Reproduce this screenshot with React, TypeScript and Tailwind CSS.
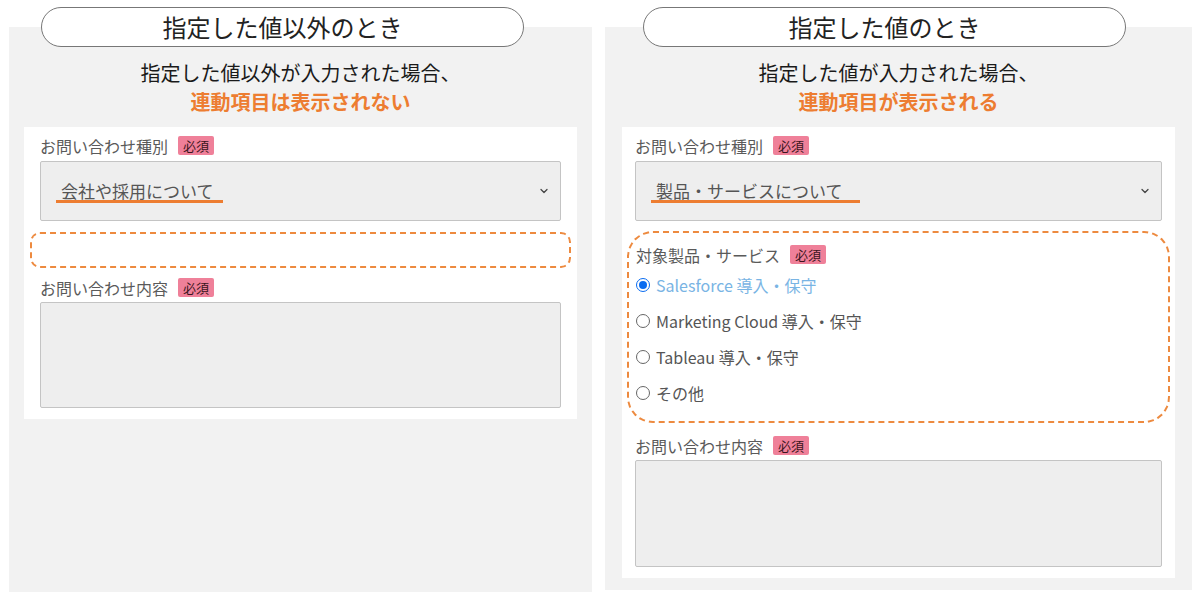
import { ChevronDown } from 'lucide-react'

const FONT = { fontFamily: '"Noto Sans CJK JP", "Noto Sans", sans-serif' }

const Badge = () => (
  <span className="ml-[10px] inline-flex h-[19px] items-center rounded-[2px] bg-[#ef8099] px-[5px] text-[13px] leading-none text-[#3b1520]">
    必須
  </span>
)

const Label = ({ text }: { text: string }) => (
  <div className="flex items-center text-[16px] leading-none text-[#5a5a5a]">
    <span>{text}</span>
    <Badge />
  </div>
)

const SelectBox = ({ value, underline }: { value: string; underline: string }) => (
  <div className="relative mt-[6px] flex h-[60px] items-center rounded-[2px] border border-[#c4c4c4] bg-[#eeeeee] pl-[20px] pr-[10px]">
    <div className="relative flex-1">
      <span className="text-[17px] leading-none text-[#555]">{value}</span>
      <div className={`absolute left-[-5px] top-[21px] h-[3px] bg-[#ed7d31] ${underline}`} />
    </div>
    <ChevronDown size={12} strokeWidth={2.5} className="text-[#444]" />
  </div>
)

const TextArea = ({ h }: { h: string }) => (
  <div className={`mt-[5px] rounded-[2px] border border-[#c4c4c4] bg-[#eeeeee] ${h}`} />
)

const Radio = ({ label, checked }: { label: string; checked?: boolean }) => (
  <div className="flex h-[36px] items-center">
    {checked ? (
      <span className="flex h-[14px] w-[14px] items-center justify-center rounded-full border border-[#0a6cf0] bg-white">
        <span className="h-[8px] w-[8px] rounded-full bg-[#0a6cf0]" />
      </span>
    ) : (
      <span className="h-[14px] w-[14px] rounded-full border border-[#666] bg-white" />
    )}
    <span className={`ml-[6px] text-[16px] leading-none ${checked ? 'text-[#79b4e4]' : 'text-[#555]'}`}>{label}</span>
  </div>
)

const Header = ({ title, line1, line2, pill }: { title: string; line1: string; line2: string; pill: string }) => (
  <>
    <div
      className={`-mt-[20px] flex h-[40px] w-[483px] items-center justify-center rounded-full border border-[#777] bg-white text-[24px] leading-none text-[#222] ${pill}`}
    >
      {title}
    </div>
    <div className="mt-[11px] text-center text-[20px] leading-[29px] text-[#1a1a1a]">{line1}</div>
    <div className="text-center text-[20px] font-bold leading-[29px] text-[#ed7d31]">{line2}</div>
  </>
)

export default function App() {
  return (
    <div className="flex h-[598px] w-[1200px] gap-[13px] bg-white pl-[9px] pt-[27px]" style={FONT}>
      <div className="flex h-[565px] w-[583px] flex-col bg-[#f2f2f2]">
        <Header
          title="指定した値以外のとき"
          line1="指定した値以外が入力された場合、"
          line2="連動項目は表示されない"
          pill="ml-[32px]"
        />
        <div className="mx-[15px] mt-[11px] bg-white px-[16px] pb-[11px] pt-[9px]">
          <Label text="お問い合わせ種別" />
          <SelectBox value="会社や採用について" underline="w-[167px]" />
          <div className="-mx-[10px] mt-[11px] h-[36px] rounded-[10px] border-2 border-dashed border-[#ed8a3f]" />
          <div className="mt-[10px]">
            <Label text="お問い合わせ内容" />
          </div>
          <TextArea h="h-[106px]" />
        </div>
      </div>

      <div className="flex h-[563px] w-[587px] flex-col bg-[#f2f2f2]">
        <Header
          title="指定した値のとき"
          line1="指定した値が入力された場合、"
          line2="連動項目が表示される"
          pill="ml-[38px]"
        />
        <div className="mx-[17px] mt-[11px] bg-white px-[13px] pb-[11px] pt-[9px]">
          <Label text="お問い合わせ種別" />
          <SelectBox value="製品・サービスについて" underline="w-[209px]" />
          <div className="-mx-[8px] mt-[10px] rounded-[26px] border-2 border-dashed border-[#ed8a3f] px-[7px] pb-[10px] pt-[12px]">
            <Label text="対象製品・サービス" />
            <div className="mt-[3px]">
              <Radio label="Salesforce 導入・保守" checked />
              <Radio label="Marketing Cloud 導入・保守" />
              <Radio label="Tableau 導入・保守" />
              <Radio label="その他" />
            </div>
          </div>
          <div className="mt-[13px]">
            <Label text="お問い合わせ内容" />
          </div>
          <TextArea h="h-[107px]" />
        </div>
      </div>
    </div>
  )
}
